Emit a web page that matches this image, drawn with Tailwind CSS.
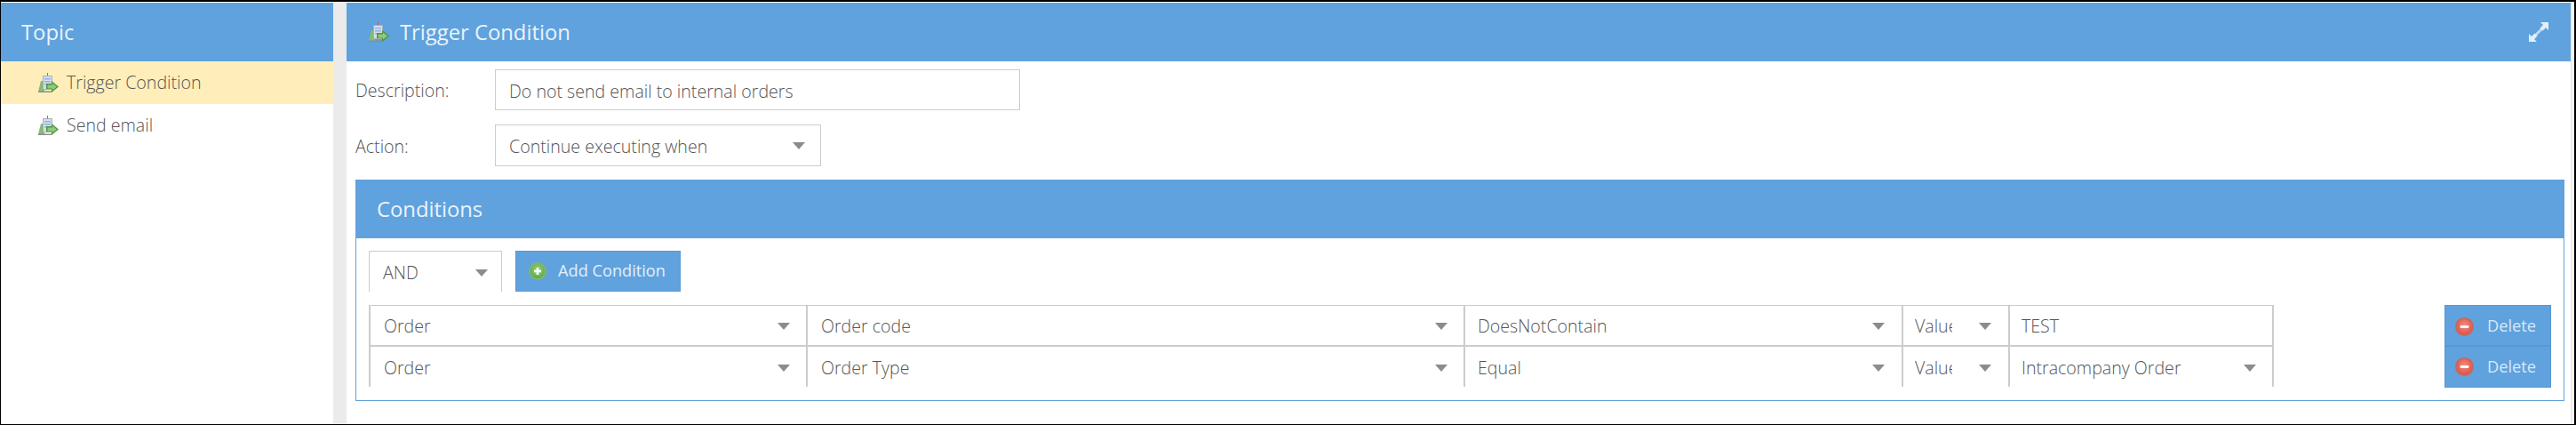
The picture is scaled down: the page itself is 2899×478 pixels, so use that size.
<!DOCTYPE html>
<html lang="en">
<head>
  <meta charset="UTF-8">
  <title>Trigger Condition</title>
  <script src="https://cdn.jsdelivr.net/npm/@tailwindcss/browser@4"></script>
</head>
<body class="bg-white font-['Open_Sans',sans-serif] font-light text-[#555] overflow-hidden">
  <svg width="0" height="0" class="absolute">
    <defs>
      <symbol id="step" viewBox="0 0 23 23">
        <rect x="10" y="0" width="1" height="3" fill="#d9534f"/>
        <path d="M3 9 0 21h7V9z" fill="#86bb78"/>
        <path d="M5.500 3.500h10v15h-10z" fill="#d6dfea" stroke="#a9aeb3" stroke-width="1"/>
        <path d="M7 6h7v1.500H7zM7 9h7v1.500H7zM7 12h4v1.500H7z" fill="#8fb4e6"/>
        <rect x="0" y="20.500" width="15" height="1.500" fill="#8a8f8c"/>
        <path d="M15 9v3H9v6h6v4l8-6.500z" fill="#4c9440"/>
        <path d="M16 11.500V13.500H10.500v4H16v2l5-4z" fill="#8fca7c"/>
      </symbol>
      <radialGradient id="plusFill" cx="50%" cy="40%" r="60%">
        <stop offset="0%" stop-color="#a0d884"/>
        <stop offset="100%" stop-color="#5ba648"/>
      </radialGradient>
      <radialGradient id="minusFill" cx="50%" cy="40%" r="60%">
        <stop offset="0%" stop-color="#f58d80"/>
        <stop offset="100%" stop-color="#d9574b"/>
      </radialGradient>
      <symbol id="plus" viewBox="0 0 20 20">
        <circle cx="10" cy="10" r="10" fill="#7cb966"/>
        <circle cx="10" cy="10" r="8" fill="url(#plusFill)"/>
        <path d="M8.700 6h2.600v2.700H14v2.600h-2.700V14H8.700v-2.700H6V8.700h2.700z" fill="#fff"/>
      </symbol>
      <symbol id="minus" viewBox="0 0 20 20">
        <circle cx="10" cy="10" r="10" fill="#c9675e"/>
        <circle cx="10" cy="10" r="8" fill="url(#minusFill)"/>
        <rect x="5.500" y="8.700" width="9" height="2.600" fill="#fff"/>
      </symbol>
      <symbol id="caret" viewBox="0 0 14 8">
        <path d="M0 0h14L7 8z" fill="#8c8c8c"/>
      </symbol>
    </defs>
  </svg>

  <div class="h-[478px] w-[2899px] flex border-t-2 border-b border-l border-r-2 border-black">
    <!-- left tree -->
    <aside class="w-[374px] pt-px">
      <div class="h-[66px] bg-[#5fa2dd] pl-[23px] pt-[2px] flex items-center text-[23.8px] font-normal text-[#eaf3fb]">Topic</div>
      <div class="h-[48px] bg-[#ffeeba] pl-[42px] flex items-center gap-[9px] text-[19.6px]">
        <svg class="w-[23px] h-[23px]"><use href="#step"/></svg>Trigger Condition
      </div>
      <div class="h-[48px] pl-[42px] flex items-center gap-[9px] text-[19.6px]">
        <svg class="w-[23px] h-[23px]"><use href="#step"/></svg>Send email
      </div>
    </aside>

    <div class="w-[15px] bg-[#ebebeb] mt-px"></div>

    <!-- right pane -->
    <main class="w-[2505px] pt-px border-r-2 border-[#ebebeb]">
      <div class="h-[66px] bg-[#5fa2dd] pl-[25px] pr-[25px] flex items-center gap-[12px] text-[23.8px] font-normal text-[#eaf3fb]">
        <svg class="w-[23px] h-[23px]"><use href="#step"/></svg>
        <span class="pt-[2px]">Trigger Condition</span>
        <svg class="ml-auto w-[22px] h-[22px]" viewBox="0 0 22 22" fill="#e3effa">
          <path d="M13 0h9v9l-3-3-3.500 3.500-3-3L16 3zM9 22H0v-9l3 3 3.500-3.500 3 3L6 19z"/>
          <path d="M14 6l2 2-8 8-2-2z" opacity=".75"/>
        </svg>
      </div>

      <div class="pl-[10px] pr-[9px] text-[19.6px]">
        <div class="h-[65px] flex items-start pt-[9px]">
          <label class="w-[157px] h-[46px] pt-[2px] flex items-center">Description:</label>
          <input value="Do not send email to internal orders" class="w-[591px] h-[46px] border border-[#ccc] px-[15px] pt-[2px] font-light text-[#555] outline-none">
        </div>
        <div class="h-[68px] flex items-start pt-[6px]">
          <label class="w-[157px] h-[47px] pt-[2px] flex items-center">Action:</label>
          <div class="w-[367px] h-[47px] border border-[#ccc] pl-[15px] pr-[17px] flex items-center justify-between">
            <span class="pt-[2px]">Continue executing when</span>
            <svg class="w-[14px] h-[8px]"><use href="#caret"/></svg>
          </div>
        </div>

        <!-- conditions panel -->
        <section class="w-[2486px] h-[249px] border border-[#5fa2dd] border-t-0">
          <div class="h-[66px] -mx-px bg-[#5fa2dd] pl-[24px] pt-[2px] flex items-center text-[23.8px] font-normal text-[#eaf3fb]">Conditions</div>

          <div class="pl-[14px] pr-[14px] pt-[14px]">
            <div class="flex gap-[15px] h-[46px]">
              <div class="w-[150px] border-t border-x border-[#ccc] pl-[15px] pr-[15px] pt-[2px] flex items-center justify-between">
                <span>AND</span>
                <svg class="w-[14px] h-[8px]"><use href="#caret"/></svg>
              </div>
              <button class="w-[186px] bg-[#5fa2dd] border border-[#5598d3] pl-[14px] flex items-center gap-[13px] font-normal text-[18.2px] text-[#e3effa]">
                <svg class="w-[20px] h-[20px]"><use href="#plus"/></svg>Add Condition
              </button>
            </div>

            <div class="mt-[15px] flex justify-between">
              <div class="w-[2144px]">
                <div class="h-[47px] flex border-t border-b-2 border-[#ccc]">
                  <div class="w-[492px] border-l-2 border-[#ccc] pl-[15px] pr-[18px] pt-[2px] flex items-center justify-between"><span>Order</span><svg class="w-[14px] h-[8px]"><use href="#caret"/></svg></div>
                  <div class="w-[740px] border-l-2 border-[#ccc] pl-[15px] pr-[18px] pt-[2px] flex items-center justify-between"><span>Order code</span><svg class="w-[14px] h-[8px]"><use href="#caret"/></svg></div>
                  <div class="w-[493px] border-l-2 border-[#ccc] pl-[14px] pr-[19px] pt-[2px] flex items-center justify-between"><span>DoesNotContain</span><svg class="w-[14px] h-[8px]"><use href="#caret"/></svg></div>
                  <div class="w-[120px] border-l-2 border-[#ccc] pl-[13px] pr-[19px] pt-[2px] flex items-center justify-between"><span class="w-[42px] overflow-hidden">Value</span><svg class="w-[14px] h-[8px]"><use href="#caret"/></svg></div>
                  <div class="w-[299px] border-x-2 border-[#ccc] pl-[13px] pt-[2px] flex items-center">TEST</div>
                </div>
                <div class="h-[45px] flex">
                  <div class="w-[492px] border-l-2 border-[#ccc] pl-[15px] pr-[18px] pt-[2px] flex items-center justify-between"><span>Order</span><svg class="w-[14px] h-[8px]"><use href="#caret"/></svg></div>
                  <div class="w-[740px] border-l-2 border-[#ccc] pl-[15px] pr-[18px] pt-[2px] flex items-center justify-between"><span>Order Type</span><svg class="w-[14px] h-[8px]"><use href="#caret"/></svg></div>
                  <div class="w-[493px] border-l-2 border-[#ccc] pl-[14px] pr-[19px] pt-[2px] flex items-center justify-between"><span>Equal</span><svg class="w-[14px] h-[8px]"><use href="#caret"/></svg></div>
                  <div class="w-[120px] border-l-2 border-[#ccc] pl-[13px] pr-[19px] pt-[2px] flex items-center justify-between"><span class="w-[42px] overflow-hidden">Value</span><svg class="w-[14px] h-[8px]"><use href="#caret"/></svg></div>
                  <div class="w-[299px] border-x-2 border-[#ccc] pl-[13px] pr-[18px] pt-[2px] flex items-center justify-between"><span>Intracompany Order</span><svg class="w-[14px] h-[8px]"><use href="#caret"/></svg></div>
                </div>
              </div>

              <div class="w-[120px] font-normal text-[18.2px] text-[#d8e8f7]">
                <button class="w-full h-[47px] bg-[#5fa2dd] border-t border-x border-b-2 border-[#5598d3] pl-[11px] pt-[2px] flex items-center gap-[15px]">
                  <svg class="w-[21px] h-[21px]"><use href="#minus"/></svg>Delete
                </button>
                <button class="w-full h-[46px] bg-[#5fa2dd] border-x border-b border-[#5598d3] pl-[11px] flex items-center gap-[15px]">
                  <svg class="w-[21px] h-[21px]"><use href="#minus"/></svg>Delete
                </button>
              </div>
            </div>
          </div>
        </section>
      </div>
    </main>
  </div>
</body>
</html>
